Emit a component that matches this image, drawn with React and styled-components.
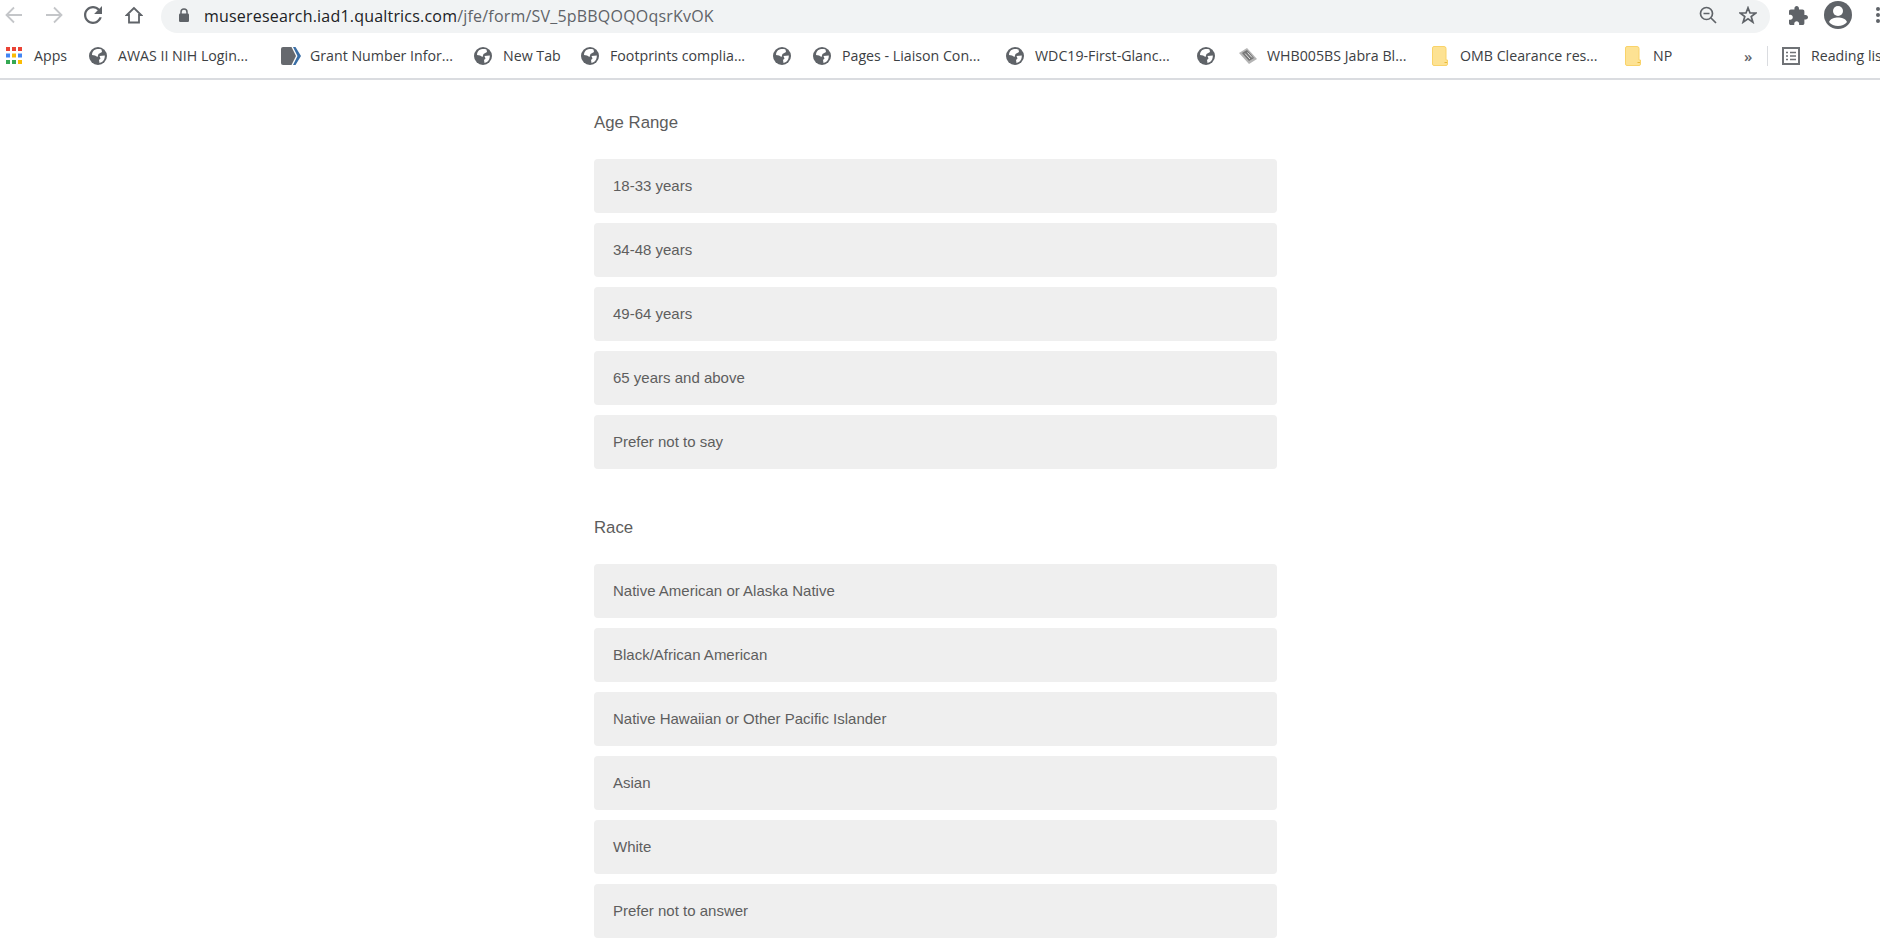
import React from "react"
import styled, { createGlobalStyle } from "styled-components"

const GlobalStyle = createGlobalStyle`
  html, body {
    margin: 0;
    padding: 0;
    background: #fff;
    overflow: hidden;
  }
`

const bookmarks = [
  { label: "Apps", icon: "apps", w: 84 },
  { label: "AWAS II NIH Login...", icon: "globe", w: 192 },
  { label: "Grant Number Infor...", icon: "grant", w: 193 },
  { label: "New Tab", icon: "globe", w: 107 },
  { label: "Footprints complia...", icon: "globe", w: 192 },
  { label: "", icon: "globe", w: 40 },
  { label: "Pages - Liaison Con...", icon: "globe", w: 193 },
  { label: "WDC19-First-Glanc...", icon: "globe", w: 191 },
  { label: "", icon: "globe", w: 41 },
  { label: "WHB005BS Jabra Bl...", icon: "jabra", w: 193 },
  { label: "OMB Clearance res...", icon: "note", w: 193 },
  { label: "NP", icon: "note", w: 121 },
]

const Globe = () => (
  <svg width="18" height="18" viewBox="0 0 18 18">
    <circle cx="9" cy="9" r="9" fill="#5f6368" />
    <path d="M5 3.200C7 2 10 1.600 12.500 2.500L13 5 9.500 7 8.500 10 6 8.500 3 8C3 6 3.800 4.200 5 3.200Z" fill="#fff" />
    <path d="M10.500 9 15.800 8.500C16 11 15 13.500 13 15L10.500 16 10 13 11.500 11.500Z" fill="#fff" />
  </svg>
)

const Apps = () => (
  <svg width="16" height="17" viewBox="0 0 16 17">
    {["#ea4335", "#ea4335", "#ea4335", "#4285f4", "#fbbc04", "#4285f4", "#34a853", "#34a853", "#fbbc04"].map((c, i) => (
      <rect key={i} x={(i % 3) * 6} y={Math.floor(i / 3) * 6.5} width="4" height="4" fill={c} />
    ))}
  </svg>
)

const Grant = () => (
  <svg width="20" height="18" viewBox="0 0 20 18">
    <path d="M0 2A2 2 0 0 1 2 0H10.500L15 9 10.500 18H2A2 2 0 0 1 0 16Z" fill="#66696e" />
    <path d="M12 0h2.500L20 9l-5.500 9H12l4.500-9Z" fill="#3a6ea5" />
  </svg>
)

const Jabra = () => (
  <svg width="20" height="18" viewBox="0 0 20 18">
    <path d="M1 6 9 1 19 12 11 17Z" fill="#b4b4b4" />
    <path d="M4 6 9 3 16 11 11 14Z" fill="#757575" />
    <path d="M7 6.500 12 12M9.500 5.500 14 10.500" stroke="#e4e4e4" strokeWidth="1" />
  </svg>
)

const Note = () => (
  <svg width="16" height="20" viewBox="0 0 16 20">
    <path d="M2 .5h10a2 2 0 0 1 2 2V14h1.500v4A1.500 1.500 0 0 1 14 19.500H2A1.500 1.500 0 0 1 .5 18V2A1.500 1.500 0 0 1 2 .5Z" fill="#fde293" stroke="#f9d36a" />
    <path d="M12.500 16.500H15" stroke="#e8b93a" strokeWidth="1" />
  </svg>
)

const bookmarkIcons = { apps: Apps, globe: Globe, grant: Grant, jabra: Jabra, note: Note }

const Back = ({ color }) => (
  <svg width="18" height="18" viewBox="0 0 18 18" fill="none" stroke={color} strokeWidth="1.800">
    <path d="M17 9H2M9 1.500 1.500 9 9 16.500" />
  </svg>
)

const Forward = ({ color }) => (
  <svg width="18" height="18" viewBox="0 0 18 18" fill="none" stroke={color} strokeWidth="1.800">
    <path d="M1 9h15M9 1.500 16.500 9 9 16.500" />
  </svg>
)

const Reload = () => (
  <svg width="18" height="18" viewBox="4 4 16 16">
    <path
      d="M17.650 6.350C16.200 4.900 14.210 4 12 4c-4.420 0-7.990 3.580-7.990 8s3.570 8 7.990 8c3.730 0 6.840-2.550 7.730-6h-2.080c-.82 2.330-3.040 4-5.650 4-3.310 0-6-2.690-6-6s2.690-6 6-6c1.660 0 3.140.69 4.220 1.780L13 11h7V4l-2.350 2.350z"
      fill="#5f6368"
    />
  </svg>
)

const Home = () => (
  <svg width="18" height="18" viewBox="0 0 18 18" fill="none" stroke="#5f6368" strokeWidth="1.800">
    <path d="M9 2 1.800 9H4v7.500h10V9h2.200Z" />
  </svg>
)

const Lock = () => (
  <svg width="12" height="14" viewBox="0 0 12 14">
    <path d="M3 6V4a3 3 0 0 1 6 0v2" fill="none" stroke="#5f6368" strokeWidth="1.500" />
    <rect x="1" y="5.500" width="10" height="8.500" rx="1.200" fill="#5f6368" />
  </svg>
)

const ZoomOut = () => (
  <svg width="18" height="18" viewBox="0 0 18 18" fill="none" stroke="#5f6368" strokeWidth="1.700">
    <circle cx="7.500" cy="7.500" r="6" />
    <path d="M4.500 7.500h6M12 12l5 5" />
  </svg>
)

const Star = () => (
  <svg width="18" height="18" viewBox="0 0 18 18" fill="none" stroke="#5f6368" strokeWidth="1.700">
    <path d="M9 1.800 11 7h5.800l-4.600 3.500 1.700 5.700L9 12.800l-4.900 3.400 1.700-5.700L1.200 7H7Z" />
  </svg>
)

const Puzzle = () => (
  <svg width="19" height="19" viewBox="2 1 21 21">
    <path
      d="M20.500 11H19V7c0-1.100-.9-2-2-2h-4V3.500C13 2.120 11.880 1 10.500 1S8 2.120 8 3.500V5H4c-1.100 0-1.990.9-1.990 2v3.800H3.500c1.490 0 2.700 1.210 2.700 2.700s-1.210 2.700-2.700 2.700H2V20c0 1.100.9 2 2 2h3.800v-1.500c0-1.490 1.210-2.700 2.700-2.700 1.490 0 2.700 1.210 2.700 2.700V22H17c1.100 0 2-.9 2-2v-4h1.500c1.380 0 2.500-1.120 2.500-2.500S21.880 11 20.500 11z"
      fill="#5f6368"
    />
  </svg>
)

const Avatar = () => (
  <svg width="28" height="28" viewBox="0 0 28 28">
    <circle cx="14" cy="14" r="14" fill="#5f6368" />
    <circle cx="14" cy="10" r="5" fill="#fff" />
    <path d="M5 21c1.500-3.500 5.500-4.500 9-4.500s7.500 1 9 4.500c-2 2.500-5.500 4-9 4s-7-1.500-9-4Z" fill="#fff" />
  </svg>
)

const ReadingList = () => (
  <svg width="18" height="18" viewBox="0 0 18 18" fill="none" stroke="#6f7276">
    <rect x="1" y="1" width="16" height="16" strokeWidth="2" />
    <path d="M4 5.500h2M8 5.500h6M4 9h2M8 9h6M4 12.500h2M8 12.500h6" strokeWidth="1.500" />
  </svg>
)

const Chrome = styled.header`
  background: #fff;
  border-bottom: 2px solid #dadce0;
  font-family: "Open Sans", sans-serif;
`

const Toolbar = styled.div`
  height: 33px;
  display: flex;
  align-items: flex-start;
  padding-left: 5px;
  overflow: hidden;
`

const NavButton = styled.span`
  width: ${(p) => p.$w}px;
  height: 30px;
  display: flex;
  align-items: center;
  flex: none;
`

const Omnibox = styled.div`
  flex: none;
  width: 1609px;
  height: 33px;
  box-sizing: border-box;
  padding: 0 13px 3px 17px;
  background: #f1f3f4;
  border-radius: 17px;
  display: flex;
  align-items: center;
`

const Url = styled.div`
  flex: 1;
  margin-left: 14px;
  padding-top: 2px;
  font-size: 16px;
  letter-spacing: 0.2px;
  color: #202124;
  white-space: nowrap;
  span {
    color: #5f6368;
  }
`

const OmniActions = styled.div`
  display: flex;
  align-items: center;
  gap: 22px;
`

const ToolActions = styled.div`
  flex: none;
  height: 30px;
  margin-left: 19px;
  display: flex;
  align-items: center;
  gap: 16px;
`

const Dots = styled.span`
  display: grid;
  gap: 2px;
  margin-left: 8px;
  i {
    width: 4px;
    height: 4px;
    border-radius: 50%;
    background: #5f6368;
  }
`

const BookmarkBar = styled.nav`
  height: 45px;
  display: flex;
  align-items: center;
  padding-left: 4px;
  overflow: hidden;
  white-space: nowrap;
`

const Bookmark = styled.div`
  flex: none;
  width: ${(p) => p.$w}px;
  display: flex;
  align-items: center;
  font-size: 14.200px;
  color: #3c4043;
`

const BookmarkIcon = styled.span`
  width: 30px;
  height: 20px;
  flex: none;
  display: flex;
  align-items: center;
  svg {
    margin-left: ${(p) => (p.$narrow ? 2 : 1)}px;
  }
`

const Overflow = styled.span`
  flex: none;
  width: 18px;
  font-size: 15px;
  font-weight: 600;
  color: #5f6368;
`

const BarDivider = styled.span`
  flex: none;
  width: 1px;
  height: 20px;
  margin: 0 13px 0 5px;
  background: #dadce0;
`

const Page = styled.main`
  width: 683px;
  margin: 0 auto;
  position: relative;
  left: -4.500px;
  font-family: "Liberation Sans", Arial, sans-serif;
`

const Question = styled.section`
  padding-top: ${(p) => p.$top}px;
`

const QuestionTitle = styled.h2`
  margin: 0 0 23px;
  height: 26px;
  line-height: 26px;
  font-size: 16.800px;
  font-weight: 400;
  color: #5c5c5c;
`

const Options = styled.div`
  display: grid;
  gap: 10px;
`

const Option = styled.div`
  height: 54px;
  line-height: 54px;
  padding-left: 19px;
  background: #efefef;
  border-radius: 4px;
  font-size: 15px;
  color: #5e5e5e;
`

const questions = [
  {
    title: "Age Range",
    top: 30,
    options: ["18-33 years", "34-48 years", "49-64 years", "65 years and above", "Prefer not to say"],
  },
  {
    title: "Race",
    top: 46,
    options: [
      "Native American or Alaska Native",
      "Black/African American",
      "Native Hawaiian or Other Pacific Islander",
      "Asian",
      "White",
      "Prefer not to answer",
    ],
  },
]

const App = () => {
  return (
    <>
      <GlobalStyle />
      <Chrome>
        <Toolbar>
          <NavButton $w={40}><Back color="#c4c6c9" /></NavButton>
          <NavButton $w={39}><Forward color="#c4c6c9" /></NavButton>
          <NavButton $w={41}><Reload /></NavButton>
          <NavButton $w={36}><Home /></NavButton>
          <Omnibox>
            <Lock />
            <Url>museresearch.iad1.qualtrics.com<span>/jfe/form/SV_5pBBQOQOqsrKvOK</span></Url>
            <OmniActions>
              <ZoomOut />
              <Star />
            </OmniActions>
          </Omnibox>
          <ToolActions>
            <Puzzle />
            <Avatar />
            <Dots><i /><i /><i /></Dots>
          </ToolActions>
        </Toolbar>
        <BookmarkBar>
          {bookmarks.map((b, i) => {
            const Icon = bookmarkIcons[b.icon]
            return (
              <Bookmark key={i} $w={b.w}>
                <BookmarkIcon $narrow={b.icon === "apps" || b.icon === "note"}><Icon /></BookmarkIcon>
                {b.label}
              </Bookmark>
            )
          })}
          <Overflow>»</Overflow>
          <BarDivider />
          <BookmarkIcon><ReadingList /></BookmarkIcon>
          <Bookmark $w={80}>Reading list</Bookmark>
        </BookmarkBar>
      </Chrome>
      <Page>
        {questions.map((q) => (
          <Question key={q.title} $top={q.top}>
            <QuestionTitle>{q.title}</QuestionTitle>
            <Options>
              {q.options.map((o) => (
                <Option key={o}>{o}</Option>
              ))}
            </Options>
          </Question>
        ))}
      </Page>
    </>
  )
}

export default App
